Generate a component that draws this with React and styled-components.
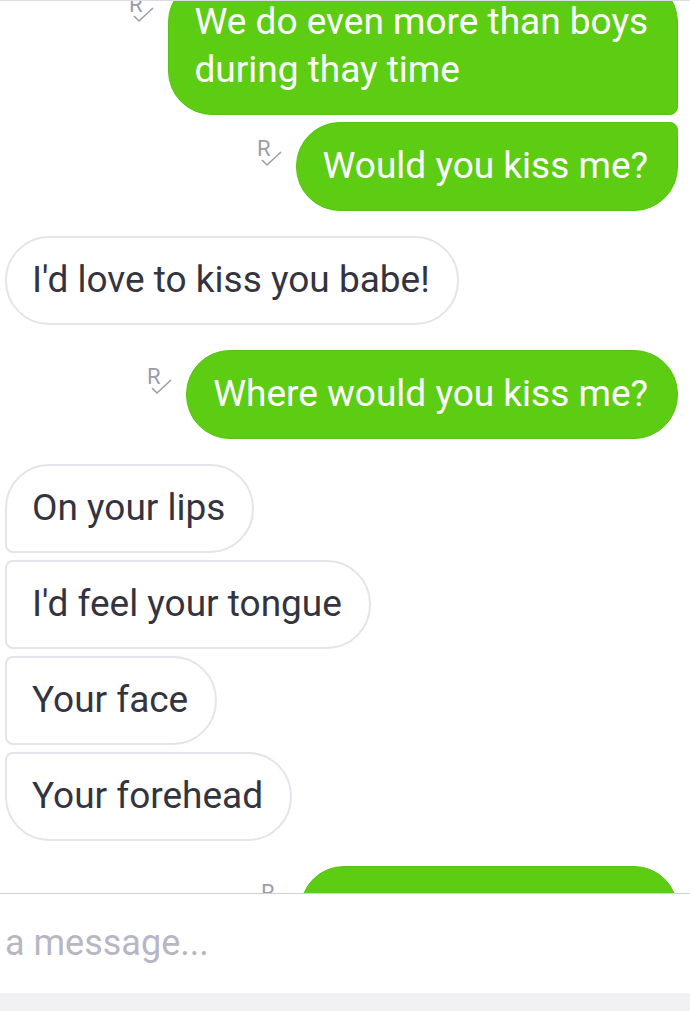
import React from 'react';
import styled, { createGlobalStyle, css } from 'styled-components';

const GlobalStyle = createGlobalStyle`
  html, body {
    margin: 0;
    padding: 0;
    background: #ffffff;
  }
  body {
    font-family: Roboto, "Noto Sans", "Liberation Sans", sans-serif;
  }
  * {
    box-sizing: border-box;
  }
`;

const Screen = styled.div`
  width: 690px;
  height: 1011px;
  display: flex;
  flex-direction: column;
  background: #ffffff;
  overflow: hidden;
`;

const TopEdge = styled.div`
  height: 1px;
  background: #dcdce4;
  flex-shrink: 0;
`;

const MessageList = styled.div`
  flex: 1;
  display: flex;
  flex-direction: column;
  justify-content: flex-end;
  overflow: hidden;
  padding: 0 12px 0 5px;
`;

const Row = styled.div`
  display: flex;
  align-items: flex-start;
  justify-content: ${p => (p.$out ? 'flex-end' : 'flex-start')};
  gap: 10px;
  margin-top: ${p => (p.$grouped ? '7px' : '25px')};
  flex-shrink: 0;
  ${p => p.$clipped && css`margin-bottom: -62px;`}
`;

const BIG = 44;
const SMALL = 8;

const Bubble = styled.div`
  font-size: 37px;
  line-height: 48px;
  padding: 19px 29px 20px 26px;
  max-width: 540px;
  border: 1px solid;
  white-space: nowrap;
  ${p =>
    p.$out
      ? css`
          background: #5dcd14;
          border-color: #57c212;
          color: #ffffff;
        `
      : css`
          background: #ffffff;
          border-color: #e4e4ea;
          border-width: 2px;
          padding: 18px 27px 19px 25px;
          color: #33343f;
        `}
  border-radius: ${p => p.$radius};
`;

const Receipt = styled.svg`
  width: 30px;
  height: 30px;
  margin-top: 17px;
  flex-shrink: 0;
  overflow: visible;
  color: #9c9cb0;
`;

const InputBar = styled.div`
  height: 100px;
  border-top: 1px solid #cfcfd8;
  display: flex;
  align-items: center;
  padding: 0 0 0 5px;
  background: #ffffff;
  flex-shrink: 0;
  position: relative;
  z-index: 1;
`;

const Placeholder = styled.span`
  font-size: 36px;
  color: #b7b7c4;
  margin-top: -2px;
`;

const BottomStrip = styled.div`
  height: 18px;
  background: #f1f1f4;
  flex-shrink: 0;
`;

const ReadMark = () => (
  <Receipt viewBox="0 0 30 30">
    <text x="1" y="17" fontSize="22" fill="currentColor" fontFamily="Roboto, sans-serif">R</text>
    <polyline points="6,21 11,26 25,13" fill="none" stroke="currentColor" strokeWidth="1.6" />
  </Receipt>
);

// corners: top-left, top-right, bottom-right, bottom-left
const r = (tl, tr, br, bl) => `${tl}px ${tr}px ${br}px ${bl}px`;

const messages = [
  { out: true, text: ['We do even more than boys', 'during thay time'], radius: r(BIG, BIG, SMALL, BIG) },
  { out: true, text: ['Would you kiss me?'], radius: r(BIG, SMALL, BIG, BIG), grouped: true },
  { out: false, text: ["I'd love to kiss you babe!"], radius: r(BIG, BIG, BIG, BIG) },
  { out: true, text: ['Where would you kiss me?'], radius: r(BIG, BIG, BIG, BIG) },
  { out: false, text: ['On your lips'], radius: r(BIG, BIG, BIG, SMALL) },
  { out: false, text: ["I'd feel your tongue"], radius: r(SMALL, BIG, BIG, SMALL), grouped: true },
  { out: false, text: ['Your face'], radius: r(SMALL, BIG, BIG, SMALL), grouped: true },
  { out: false, text: ['Your forehead'], radius: r(SMALL, BIG, BIG, BIG), grouped: true },
  { out: true, text: ['Mmm'], radius: r(BIG, BIG, BIG, BIG), clipped: true },
];

const App = () => (
  <Screen>
    <GlobalStyle />
    <TopEdge />
    <MessageList>
      {messages.map((m, i) => (
        <Row key={i} $out={m.out} $grouped={m.grouped} $clipped={m.clipped}>
          {m.out && <ReadMark />}
          <Bubble $out={m.out} $radius={m.radius} style={m.clipped ? { width: 378 } : undefined}>
            {m.text.map((line, j) => (
              <div key={j}>{line}</div>
            ))}
          </Bubble>
        </Row>
      ))}
    </MessageList>
    <InputBar>
      <Placeholder>a message...</Placeholder>
    </InputBar>
    <BottomStrip />
  </Screen>
);

export default App;
